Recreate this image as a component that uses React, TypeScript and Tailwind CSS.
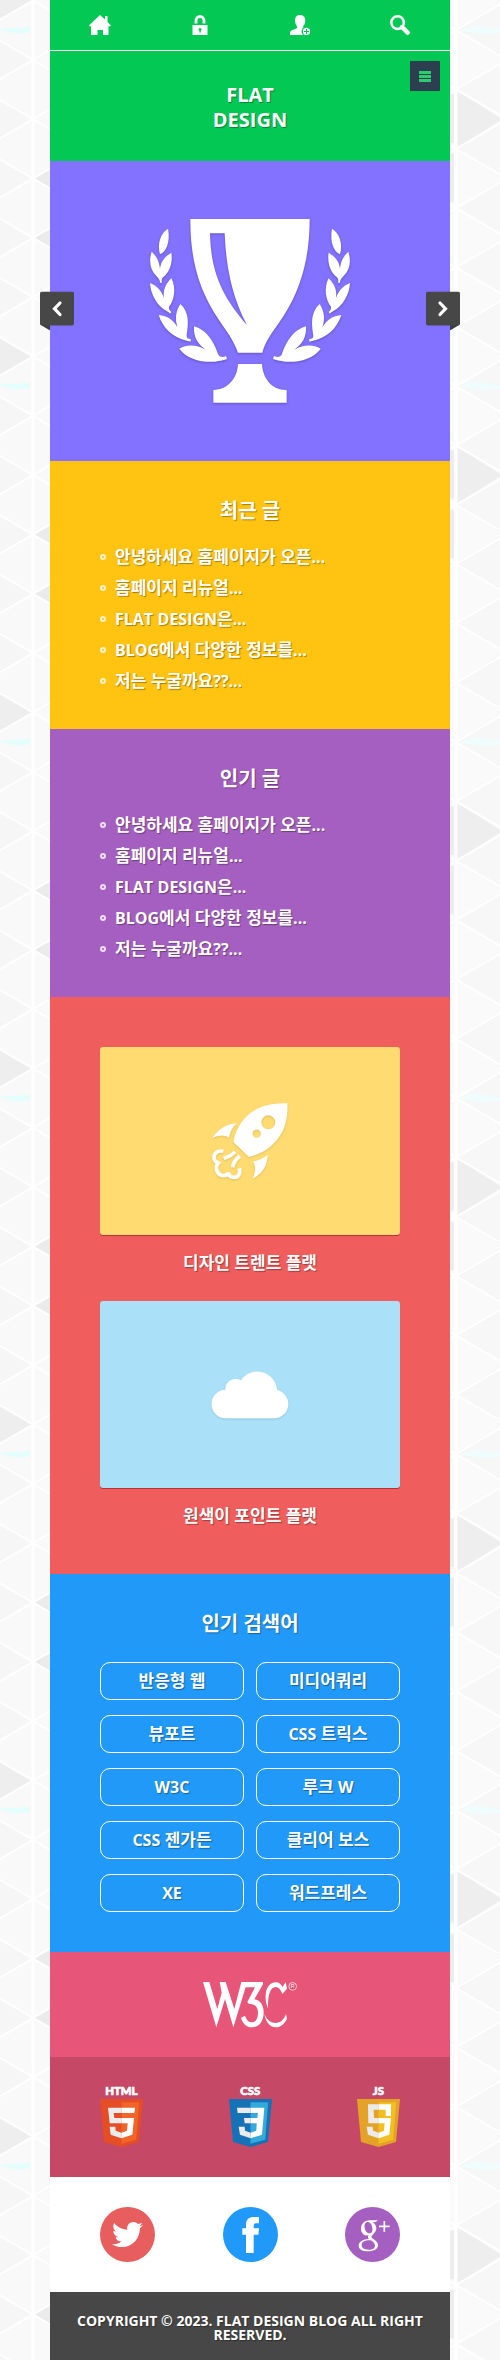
import type { ReactNode } from "react";
import { FaTwitter } from "react-icons/fa";

const posts = [
  "안녕하세요 홈페이지가 오픈...",
  "홈페이지 리뉴얼...",
  "FLAT DESIGN은...",
  "BLOG에서 다양한 정보를...",
  "저는 누굴까요??...",
];

const keywords = [
  "반응형 웹",
  "미디어쿼리",
  "뷰포트",
  "CSS 트릭스",
  "W3C",
  "루크 W",
  "CSS 젠가든",
  "클리어 보스",
  "XE",
  "워드프레스",
];

const STEP = 356 / 6;

function TriangleStrip({ id, lineX, offset, side }: { id: string; lineX: number; offset: number; side: "left" | "right" }) {
  const nodes = [-1, 0, 1, 2, 3, 4, 5, 6, 7].map((k) => offset + k * STEP);
  const left = side === "left";
  return (
    <svg
      aria-hidden="true"
      className={left ? "absolute left-0 top-0 h-full w-[10%]" : "absolute right-0 top-0 h-full w-[10%]"}
    >
      <defs>
        <pattern id={id} width="600" height="356" patternUnits="userSpaceOnUse">
          <rect width="600" height="356" fill="#f9f9f9" />
          {nodes.map((y, i) => (
            <g key={i}>
              {left ? (
                <>
                  <path d={`M33 ${y}L-18 ${y - 29.7}V${y + 29.7}Z`} fill={i === 1 || i === 7 ? "#eeeeee" : "#f6f6f6"} />
                  <path d={`M33 ${y}L84 ${y - 29.7}V${y + 29.7}Z`} fill={i === 4 || i === 5 ? "#ebebeb" : "#f9f9f9"} />
                </>
              ) : (
                <>
                  <path
                    d={`M6 ${y}V${y + STEP}L52 ${y + STEP / 2}Z`}
                    fill={i === 3 ? "#eeeeee" : "#fafafa"}
                  />
                  <path d={`M0 ${y + 5}V${y + STEP - 6}H4V${y + 5}Z`} fill={i === 3 || i === 4 ? "#ededed" : "#fafafa"} />
                  <path d={`M6 ${y}L57 ${y - 29.7}V${y + 29.7}Z`} fill="#f7f7f7" />
                </>
              )}
            </g>
          ))}
          {nodes.map((y, i) => (
            <path
              key={i}
              d={`M${lineX - 51} ${y - 29.7}L${lineX + 51} ${y + 29.7}M${lineX - 51} ${y + 29.7}L${lineX + 51} ${y - 29.7}`}
              stroke="#ffffff"
              strokeWidth="2"
            />
          ))}
          <path d={`M${lineX} 0V356`} stroke="#ffffff" strokeWidth="3" />
          {left ? (
            <path d="M0 29Q10 27 18 28Q26 26 30 28V32Q18 35 10 32Q5 31 0 30Z" fill="#e4fdfd" />
          ) : (
            <path d="M9 30Q20 26 30 26Q42 28 50 29V33Q35 34 22 33Z" fill="#effdfd" />
          )}
        </pattern>
      </defs>
      <rect width="100%" height="100%" fill={`url(#${id})`} />
    </svg>
  );
}

/* Latin runs are set slightly smaller and heavier than the Hangul around them. */
function Mixed({ text }: { text: string }) {
  return (
    <>
      {text.split(/([A-Za-z0-9?.]+)/).map((run, i) =>
        i % 2 === 1 ? (
          <span key={i} className="text-[16px] font-bold">
            {run}
          </span>
        ) : (
          run
        ),
      )}
    </>
  );
}

function Heading({ children }: { children: ReactNode }) {
  return <h2 className="text-center text-[20px] font-semibold leading-[30px]">{children}</h2>;
}

function PostSection({ title, tone }: { title: string; tone: string }) {
  return (
    <section className={`px-[12.5%] pb-[33px] pt-[35px] ${tone}`}>
      <Heading>{title}</Heading>
      <ul className="mt-[15px]">
        {posts.map((post) => (
          <li key={post} className="flex h-[31px] items-center gap-[9px]">
            <span className="size-1.5 shrink-0 rounded-full border-2 border-white/80" />
            <a href="#post" className="truncate text-[17px] font-semibold leading-[31px]">
              <Mixed text={post} />
            </a>
          </li>
        ))}
      </ul>
    </section>
  );
}

function ArrowButton({ side }: { side: "left" | "right" }) {
  const left = side === "left";
  return (
    <button
      type="button"
      aria-label={left ? "이전" : "다음"}
      className={
        left
          ? "absolute -left-2.5 top-1/2 -translate-y-1/2"
          : "absolute -right-2.5 top-1/2 -translate-y-1/2"
      }
    >
      <svg width="34" height="39" viewBox="0 0 34 39" className="block">
        <path d={left ? "M0 33H10V39Z" : "M34 33H24V39Z"} fill="#3c4043" />
        <rect width="34" height="34" rx="2" fill="#474747" />
        <path
          d={left ? "M20 11.5L14.5 17.2L20 23" : "M14 11.5L19.5 17.2L14 23"}
          fill="none"
          stroke="#fff"
          strokeWidth="3.2"
          strokeLinecap="round"
        />
      </svg>
    </button>
  );
}

function Laurel() {
  return (
    <>
      <path d="M504 207C484 218 470 250 480 284C500 275 511 245 504 207Z" />
      <path d="M455 276C446 305 450 330 470 350C478 358 480 364 480 369L486 369C484 362 485 357 490 352C508 338 519 310 514 279C495 290 482 305 480 328C478 305 470 290 455 276Z" />
      <path d="M450 370C452 405 472 440 500 454C505 457 508 459 510 462L514 457C508 452 506 447 507 441C522 425 530 385 514 356C498 372 488 390 492 415C485 395 472 378 450 370Z" />
      <path d="M476 466C488 505 520 535 560 543C565 544 569 545 572 546L572 538C563 538 560 534 560 528C564 500 571 460 541 433C527 455 524 478 533 503C520 482 503 468 476 466Z" />
      <path d="M582 500C580 535 595 555 617 570C590 555 562 553 538 567C560 598 605 609 645 606C660 604 672 601 681 598L678 589C668 594 660 592 655 585C645 560 630 515 582 500Z" />
    </>
  );
}

function Trophy() {
  return (
    <svg
      viewBox="450 178 600 552"
      role="img"
      aria-label="트로피"
      className="w-1/2 overflow-visible fill-white [filter:drop-shadow(0_1px_1px_rgba(0,0,0,0.25))]"
    >
      <path
        fillRule="evenodd"
        d="M571 178H929C929 290 905 385 850 470C820 515 795 545 787 579H714C700 540 680 515 655 478C600 395 571 310 571 178ZM630 221C632 340 670 415 741 496C695 410 678 320 674 221Z"
      />
      <path d="M714 613H786C788 655 815 692 860 691V729H640V691C685 690 712 655 714 613Z" />
      <Laurel />
      <g transform="translate(1500 0) scale(-1 1)">
        <Laurel />
      </g>
    </svg>
  );
}

function Rocket() {
  return (
    <svg
      viewBox="517 309 228 228"
      aria-hidden="true"
      className="w-[76px] overflow-visible fill-white [filter:drop-shadow(0_1px_1px_rgba(0,0,0,0.12))]"
    >
      <path
        fillRule="evenodd"
        d="M743 310C680 308 640 325 610 361C595 380 585 402 581 426L628 471C655 464 685 450 707 425C735 395 746 355 743 310ZM686 346A21 21 0 1 1 686 388A21 21 0 1 1 686 346ZM651 388.5A12.5 12.5 0 1 1 651 413.5A12.5 12.5 0 1 1 651 388.5Z"
      />
      <path d="M590 370C560 372 535 388 517 415C537 404 555 405 568 413C570 397 578 383 590 370Z" />
      <path d="M684 464C667 477 655 481 640 485C650 500 648 518 639 536C668 520 683 497 684 464Z" />
      <g fill="none" stroke="#fff" strokeWidth="11">
        <path d="M551 454C535 450 523 460 523 472C523 480 527 486 536 489C525 500 530 520 545 526C553 528 562 526 567 518C566 534 590 536 597 525C601 519 601 512 599 505" />
        <path d="M552 475Q574 469 586 455" />
        <path d="M579 502Q581 484 600 468" />
      </g>
    </svg>
  );
}

function Cloud() {
  return (
    <svg
      viewBox="516 272 228 142"
      aria-hidden="true"
      className="w-[76px] overflow-visible fill-white [filter:drop-shadow(0_1px_1px_rgba(0,0,0,0.1))]"
    >
      <path d="M559 414A43 43 0 0 1 556 328A31 31 0 0 1 603 300A59 59 0 0 1 711 329A43 43 0 0 1 701 414Z" />
    </svg>
  );
}

function Card({ tone, caption, children }: { tone: string; caption: string; children: ReactNode }) {
  return (
    <figure>
      <a
        href="#work"
        aria-label={caption}
        className={`flex aspect-[8/5] items-center justify-center rounded-[3px] shadow-[0_1px_0_rgba(150,20,30,0.6)] ${tone}`}
      >
        {children}
      </a>
      <figcaption className="mb-[26px] mt-4 text-center text-[17px] font-semibold leading-6">{caption}</figcaption>
    </figure>
  );
}

function W3CLogo() {
  return (
    <svg viewBox="489 126 282 136" role="img" aria-label="W3C" className="w-[94px] overflow-visible fill-white">
      <path d="M489 126H508L532 207L545 158L539 126H557L583 207L604 126H669V133L643 178C660 180 671 195 671 218C671 243 657 262 636 262C619 262 608 250 603 233L615 227C619 240 626 247 635 247C647 247 654 236 654 218C654 200 643 191 626 191L622 186L645 142H617L580 262L555 177L529 262Z" />
      <path d="M737 126L741 146L727 162C722 148 716 141 707 141C692 142 683 160 684 205C677 190 675 172 678 155C684 136 694 127 708 127C717 127 723 132 728 141Z" />
      <path d="M673 222C680 240 693 249 707 249C721 249 731 240 738 223L741 236C733 252 722 262 708 262C690 262 678 247 673 222Z" />
      <circle cx="758" cy="139" r="11.5" fill="none" stroke="#fff" strokeWidth="2" />
      <text x="758" y="145" textAnchor="middle" fontSize="16" fontFamily="Liberation Sans, sans-serif">
        R
      </text>
    </svg>
  );
}

type ShieldProps = { label: string; x: number; base: string; light: string; shade: string; face: string };

function Shield({ label, x, base, light, shade, face }: ShieldProps) {
  return (
    <svg viewBox={`${x} 441 129 180`} role="img" aria-label={label} className="h-[60px] w-[43px] overflow-visible">
      <text
        x={x + 64}
        y="465"
        textAnchor="middle"
        fontSize="34"
        fontWeight="900"
        fontFamily="Lato, sans-serif"
        fill="#fff"
        stroke="#fff"
        strokeWidth="2"
        className="[text-shadow:none]"
      >
        {label}
      </text>
      <path d={`M${x} 477h129l-12 129l-52.5 15l-52.5 -15Z`} fill={base} />
      <path d={`M${x + 64.5} 487h53l-9 112l-44 12Z`} fill={light} />
      <path d={shade} fill="#ebebeb" />
      <path d={face} fill="#fff" />
    </svg>
  );
}

const social = "flex size-[55px] items-center justify-center rounded-full text-white";

export default function App() {
  return (
    <div className="relative min-h-screen overflow-hidden bg-[#f9f9f9] font-['Open_Sans','Noto_Sans_CJK_KR',sans-serif] text-white">
      <TriangleStrip id="tri-left" side="left" lineX={33} offset={0.5} />
      <TriangleStrip id="tri-right" side="right" lineX={6} offset={-29.2} />

      <div className="relative mx-auto w-4/5 [text-shadow:1px_1px_1px_rgba(0,0,0,0.35)]">
        <nav className="grid h-[51px] grid-cols-4 place-items-center border-b border-white bg-[#03c954]">
          <a href="#home" aria-label="홈">
            <svg width="22" height="20" viewBox="0 0 22 20" fill="#fff">
              <path d="M11 0L16 4.5V1H18.5V7L22 10.5L20.5 11.5L19.5 11V20H14V15H8.5V20H2V11L1 11.5L0 10.5Z" />
            </svg>
          </a>
          <a href="#login" aria-label="로그인">
            <svg width="16" height="20" viewBox="0 0 16 20" fill="#fff">
              <path d="M4 8.5V5.500A4 4 0 0 1 12 5.500V8.5" fill="none" stroke="#fff" strokeWidth="2.8" />
              <path
                fillRule="evenodd"
                d="M.5 10H15.500V20H.5ZM8 13A1.500 1.500 0 0 0 7.400 15.800V17.500H8.800V15.800A1.500 1.500 0 0 0 8 13Z"
              />
            </svg>
          </a>
          <a href="#join" aria-label="회원가입">
            <svg width="20" height="20" viewBox="0 0 20 20" fill="#fff">
              <path d="M10 0C7 0 5 2 5 5.500C5 8 6 10 7 11.200C7.600 13 6.500 13.600 4.500 14.300C1.500 15.200 0 16 0 18V20H13A5 5 0 0 1 13.500 12.500C13 12 13 11.600 13.200 11.200C14.500 10 15.300 8 15.300 5.500C15.300 2 13 0 10 0Z" />
              <path fillRule="evenodd" d="M16.500 12.800A3.600 3.600 0 1 1 16.500 20A3.600 3.600 0 1 1 16.500 12.800ZM16 14V16H14V17H16V19H17V17H19V16H17V14Z" />
            </svg>
          </a>
          <a href="#search" aria-label="검색">
            <svg width="20" height="20" viewBox="0 0 20 20" fill="none" stroke="#fff">
              <circle cx="7.6" cy="7.6" r="6.3" strokeWidth="2.5" />
              <path d="M12 12L17.6 17.6" strokeWidth="4.4" strokeLinecap="round" />
            </svg>
          </a>
        </nav>

        <header className="relative flex justify-center bg-[#03c954] pb-[29px] pt-[31px]">
          <h1 className="w-20 text-center text-[20px] font-bold leading-[25px]">FLAT DESIGN</h1>
          <button
            type="button"
            aria-label="메뉴"
            className="absolute right-2.5 top-2.5 flex size-[30px] flex-col items-center justify-center gap-px bg-[#2d3e50]"
          >
            <span className="h-[3px] w-3 bg-[#2ecc71]" />
            <span className="h-[3px] w-3 bg-[#2ecc71]" />
            <span className="h-[3px] w-3 bg-[#2ecc71]" />
          </button>
        </header>

        <section className="relative flex aspect-[4/3] items-center justify-center bg-[#8371ff]">
          <Trophy />
          <ArrowButton side="left" />
          <ArrowButton side="right" />
        </section>

        <PostSection title="최근 글" tone="bg-[#ffc411]" />
        <PostSection title="인기 글" tone="bg-[#a55fc1]" />

        <section className="bg-[#f05d5d] px-[12.5%] pb-5 pt-[50px]">
          <Card tone="bg-[#ffdb72]" caption="디자인 트렌트 플랫">
            <Rocket />
          </Card>
          <Card tone="bg-[#aae0f8]" caption="원색이 포인트 플랫">
            <Cloud />
          </Card>
        </section>

        <section className="bg-[#2199f8] px-[12.5%] pb-10 pt-[35px]">
          <Heading>인기 검색어</Heading>
          <ul className="mt-[23px] grid grid-cols-2 gap-x-3 gap-y-[15px]">
            {keywords.map((word) => (
              <li key={word}>
                <a
                  href="#keyword"
                  className="block rounded-[10px] border border-white text-center text-[17px] font-semibold leading-9"
                >
                  <Mixed text={word} />
                </a>
              </li>
            ))}
          </ul>
        </section>

        <section className="flex h-[105px] items-center justify-center bg-[#e75679]">
          <W3CLogo />
        </section>

        <section className="flex justify-between bg-[#c54866] px-[12.5%] py-[30px]">
          <Shield
            label="HTML"
            x={179}
            base="#e44d26"
            light="#f16529"
            shade="M203 503H243V519H220L222 534H243V550H208ZM208 560H225L226 572L243 578V595L211 584Z"
            face="M243 503H284L282 519H243ZM243 534H281L276 584L243 595V578L260 572L262 550H243Z"
          />
          <Shield
            label="CSS"
            x={564}
            base="#1572b6"
            light="#33a9dc"
            shade="M588 503H629V519H590ZM609 534H629V550H611ZM593 560H611L612 572L629 578V595L597 584Z"
            face="M629 503H670L663 584L629 595V578L646 572L647 550H629V534H649L651 519H629Z"
          />
          <Shield
            label="JS"
            x={951}
            base="#e5a228"
            light="#f1bf22"
            shade="M984 493H1016V509H1001L1002 534H1016V550H985ZM980 560H998L999 572L1016 578V595L984 584Z"
            face="M1016 493H1053V528H1037V509H1016ZM1016 534H1053L1048 584L1016 595V578L1032 572L1034 550H1016Z"
          />
        </section>

        <section className="flex justify-between bg-white px-[12.5%] py-[30px]">
          <a href="#twitter" aria-label="Twitter" className={`${social} bg-[#e85e5e]`}>
            <FaTwitter size={31} />
          </a>
          <a href="#facebook" aria-label="Facebook" className={`${social} bg-[#2199f8]`}>
            <svg width="55" height="55" viewBox="669 141 165 165" fill="#fff">
              <path d="M727 205H738V194C738 178 747 171 762 171H777V190H768C763 190 761 193 761 198V205H777L775 224H761V279H738V224H727Z" />
            </svg>
          </a>
          <a href="#google" aria-label="Google+" className={`${social} bg-[#a55fc1]`}>
            <svg width="55" height="55" viewBox="1035 141 165 165" fill="#fff">
              <path
                fillRule="evenodd"
                d="M1108 181H1134L1127 186H1118C1126 192 1129 199 1129 205C1129 214 1123 220 1118 224C1113 229 1113 232 1119 236C1128 242 1134 248 1134 256C1134 267 1122 274 1104 274C1086 274 1076 267 1076 257C1076 246 1088 237 1107 237C1104 234 1103 231 1105 226C1092 228 1083 219 1083 206C1083 192 1093 181 1108 181ZM1104 186C1096 186 1092 193 1094 204C1096 214 1102 221 1109 220C1116 219 1119 212 1117 203C1115 193 1110 186 1104 186ZM1109 241C1094 241 1085 246 1085 255C1085 264 1093 269 1106 269C1118 269 1125 264 1125 257C1125 250 1120 246 1113 241Z"
              />
              <path d="M1137 199H1169M1153 183V215" stroke="#fff" strokeWidth="5" />
            </svg>
          </a>
        </section>

        <footer className="bg-[#474747] px-5 pb-[18px] pt-[22px] text-center text-[14px] font-bold leading-[14px]">
          COPYRIGHT © 2023. FLAT DESIGN BLOG ALL RIGHT RESERVED.
        </footer>
      </div>
    </div>
  );
}
